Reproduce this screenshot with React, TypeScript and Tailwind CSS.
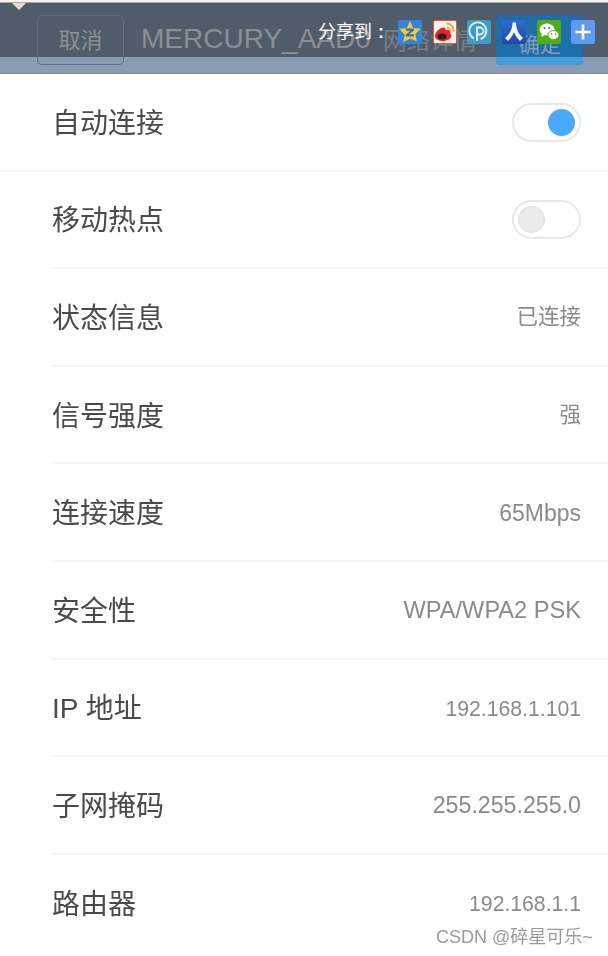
import React from 'react';

const font = { fontFamily: '"Liberation Sans", "Noto Sans CJK SC", sans-serif' };

interface Row {
  label: string;
  value?: string;
  valueClass?: string;
  toggle?: 'on' | 'off';
}

const rows: Row[] = [
  { label: '自动连接', toggle: 'on' },
  { label: '移动热点', toggle: 'off' },
  { label: '状态信息', value: '已连接', valueClass: 'text-[21.500px]' },
  { label: '信号强度', value: '强', valueClass: 'text-[21.500px]' },
  { label: '连接速度', value: '65Mbps', valueClass: 'text-[23px]' },
  { label: '安全性', value: 'WPA/WPA2 PSK', valueClass: 'text-[23.600px]' },
  { label: 'IP 地址', value: '192.168.1.101', valueClass: 'text-[21.200px]' },
  { label: '子网掩码', value: '255.255.255.0', valueClass: 'text-[23.200px]' },
  { label: '路由器', value: '192.168.1.1', valueClass: 'text-[21.200px]' },
];

const Toggle: React.FC<{ on: boolean }> = ({ on }) => (
  <div
    className={`-mt-[1px] flex h-[39px] w-[69px] items-center rounded-full border-2 border-[#e8e8e8] bg-white px-[4px] ${
      on ? 'justify-end' : 'justify-start'
    }`}
  >
    <div className={`h-[27px] w-[27px] rounded-full ${on ? 'bg-[#4aa8fd]' : 'border border-[#dedede] bg-[#ebebeb]'}`} />
  </div>
);

const ShareIcons = () => (
  <div className="flex items-center gap-[10.700px]">
    {/* qzone */}
    <svg width="24" height="24" viewBox="0 0 24 24">
      <rect width="24" height="24" rx="2" fill="#2f86e0" />
      <path d="M12 1l3.300 6.900 7.500.9-5.500 5.100 1.500 7.400L12 18.600l-6.800 3.700 1.500-7.400L1.200 8.800l7.500-.9z" fill="#f6c72e" />
      <path d="M8 8.500h8v1.800l-4.800 4h4.800V16.500H7.800v-1.800l4.800-4H8z" fill="#2f6fc0" />
    </svg>
    {/* weibo */}
    <svg width="24" height="24" viewBox="0 0 24 24">
      <rect x="0.500" y="0.500" width="23" height="23" rx="1.500" fill="#f7f3ee" stroke="#dc5a2c" />
      <path d="M2 16c0-4 5-8.500 8.500-8.500 2 0 2.500 1.500 2 3 3-1 5-.5 5 1.500 0 .8-.3 1.300-.5 1.500 1 .5 1.500 1 1.500 2 0 3-4.500 5.500-8.500 5.500S2 19.500 2 16z" fill="#e3242b" />
      <ellipse cx="9" cy="16.500" rx="4.500" ry="3" fill="#2a1f1f" />
      <path d="M13.500 3.500a7 7 0 0 1 7 8" stroke="#f2a13c" strokeWidth="2" fill="none" />
      <path d="M14 7.500a3.200 3.200 0 0 1 3 4" stroke="#f2a13c" strokeWidth="1.800" fill="none" />
    </svg>
    {/* pengyou */}
    <svg width="24" height="24" viewBox="0 0 24 24">
      <rect width="24" height="24" rx="2" fill="#3f9bc8" />
      <path d="M7 18.500A8.500 8.500 0 1 1 13.500 19" stroke="#e4f3f8" strokeWidth="1.800" fill="none" />
      <path d="M10 21V7.500h3a3.500 3.500 0 0 1 0 7h-2" stroke="#e4f3f8" strokeWidth="1.800" fill="none" />
    </svg>
    {/* renren */}
    <svg width="24" height="24" viewBox="0 0 24 24">
      <defs>
        <linearGradient id="rr" x1="0" y1="0" x2="0" y2="1">
          <stop offset="0" stopColor="#2f6ccd" />
          <stop offset="1" stopColor="#2147a8" />
        </linearGradient>
      </defs>
      <rect width="24" height="24" rx="2" fill="url(#rr)" />
      <path d="M10.500 2.500h3.500c0 7 3 12 7 15.500l-3 3c-3-3-5-6-6-9-1 3-3 6-6 9l-3-3c5-4 7.500-9 7.500-15.500z" fill="#f4f7fc" />
    </svg>
    {/* wechat */}
    <svg width="24" height="24" viewBox="0 0 24 24">
      <rect width="24" height="24" rx="2" fill="#4fae13" />
      <ellipse cx="10" cy="9.500" rx="7.500" ry="6" fill="#fff" />
      <path d="M5 13l-.8 4 4.300-2.500z" fill="#fff" />
      <ellipse cx="16.500" cy="15" rx="5.500" ry="4.500" fill="#fff" stroke="#4fae13" />
      <circle cx="7.500" cy="8" r="1" fill="#3a8a10" />
      <circle cx="12" cy="8" r="1" fill="#3a8a10" />
      <circle cx="14.500" cy="14" r="0.800" fill="#3a8a10" />
      <circle cx="18.500" cy="14" r="0.800" fill="#3a8a10" />
    </svg>
    {/* more */}
    <svg width="24" height="24" viewBox="0 0 24 24">
      <rect width="24" height="24" rx="2" fill="#5f9bf0" />
      <path d="M10.700 4.500h2.600v6.200h6.200v2.600h-6.200v6.200h-2.600v-6.200H4.500v-2.600h6.200z" fill="#fff" />
    </svg>
  </div>
);

const Header = () => (
  <div className="relative h-[74px] w-full">
    <div className="h-[3px] border-b border-[#a9a9a9] bg-[#f4f4f4]" />
    <div className="flex h-[54px] items-center bg-[#505c69] pt-[18px]">
      <span className="ml-[141px] w-[242px] whitespace-nowrap text-[28px] leading-none text-[#8b8f94]">MERCURY_AAD0</span>
      <span className="mt-[6px] whitespace-nowrap text-[23.500px] leading-none text-[#777f88]">网络详情</span>
    </div>
    <div className="h-[17px] border-b border-[#808ea3] bg-[#8b9bb3]" />

    <div className="absolute left-[12px] top-[3px] h-0 w-0 border-x-[7px] border-t-[7px] border-x-transparent border-t-[#e6e0c0]" />
    <div className="absolute left-[37px] top-[15px] flex h-[50px] w-[87px] items-center justify-center rounded-[5px] border border-[#5f6d80] text-[22px] text-[#8b8f94]">
      取消
    </div>
    <div className="absolute left-[496px] top-[15px] h-[50px] w-[87px] rounded-[5px] bg-[#1f6ea8]">
      <div className="absolute inset-x-0 bottom-0 h-[8px] rounded-b-[5px] bg-[#459fdf]" />
      <span className="absolute left-[23px] top-[17px] text-[21px] leading-[26px] text-[#7f9db8]">确定</span>
    </div>
    <div className="absolute left-[318px] top-[20px] flex items-center">
      <span className="w-[80px] whitespace-nowrap text-[18px] leading-[24px] text-white">
        分享到<span className="ml-[6px] font-bold">:</span>
      </span>
      <ShareIcons />
    </div>
  </div>
);

const App: React.FC = () => {
  return (
    <div className="relative h-[956px] w-[608px] overflow-hidden bg-white" style={font}>
      <div className="blur-[0.5px]">
        <Header />
        {rows.map((row, index) => (
          <div
            key={index}
            className={`flex h-[97.600px] items-center justify-between pr-[27px] ${
              index === 0 ? 'border-b-2 border-[#f6f6f6] pl-[52px] pt-[2px]' : ''
            } ${index > 0 && index < rows.length - 1 ? 'ml-[52px] border-b-2 border-[#f6f6f6] pt-[2px]' : ''} ${
              index === rows.length - 1 ? 'ml-[52px]' : ''
            }`}
          >
            <span className="mt-[2px] text-[28px] leading-none text-[#4a4a4a]">{row.label}</span>
            {row.toggle ? (
              <Toggle on={row.toggle === 'on'} />
            ) : (
              <span className={`leading-none text-[#8a8a8a] ${row.valueClass}`}>{row.value}</span>
            )}
          </div>
        ))}
      </div>
      <div className="absolute left-[436px] top-[926px] whitespace-nowrap text-[18px] leading-[22px] text-[#9a9a9a]">
        CSDN @碎星可乐~
      </div>
    </div>
  );
};

export default App;
